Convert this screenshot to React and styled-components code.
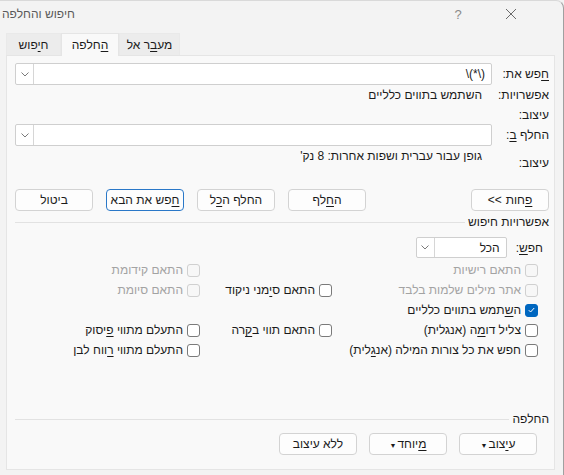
import React from 'react';
import styled, { createGlobalStyle } from 'styled-components';

const GlobalStyle = createGlobalStyle`
  body {
    margin: 0;
    background: #f3f3f3;
    font-family: "Liberation Sans", "DejaVu Sans", sans-serif;
    font-size: 12px;
    color: #1b1b1b;
  }
`;

const Window = styled.div`
  width: 564px;
  height: 475px;
  box-sizing: border-box;
  background: #f3f3f3;
  border-top: 1px solid #d9d9d9;
  border-right: 1px solid #a0a0a0;
  border-top-right-radius: 8px;
  display: flex;
  flex-direction: column;
  overflow: hidden;
`;

const TitleBar = styled.div`
  height: 26px;
  display: flex;
  align-items: center;
  padding-left: 2px;
`;

const Title = styled.div`
  flex: 1;
  color: #5a5a5a;
  font-size: 12px;
`;

const TitleButton = styled.div`
  width: 46px;
  height: 26px;
  display: flex;
  align-items: center;
  justify-content: center;
  color: #8a8a8a;
  font-size: 13px;
  margin-left: ${p => p.$gap || 0}px;
`;

const TitleControls = styled.div`
  display: flex;
  padding-right: 29px;
`;

const TabStrip = styled.div`
  display: flex;
  padding-left: 6px;
  margin-top: 6px;
  height: 22px;
`;

const Tab = styled.div`
  width: ${p => p.$w}px;
  display: flex;
  align-items: center;
  justify-content: center;
  box-sizing: border-box;
  direction: rtl;
  background: ${p => (p.$active ? '#f9f9f9' : '#ececec')};
  border: 1px solid ${p => (p.$active ? '#e5e5e5' : '#e9e9e9')};
  border-bottom: none;
  margin-bottom: ${p => (p.$active ? '-1px' : '0')};
  position: relative;
  z-index: ${p => (p.$active ? 1 : 0)};
  color: #1b1b1b;
`;

const Panel = styled.div`
  flex: 1;
  margin: 0 8px 5px 6px;
  background: #f9f9f9;
  border: 1px solid #e5e5e5;
  direction: rtl;
  padding: 7px 5px 14px 8px;
  display: flex;
  flex-direction: column;
`;

const FormGrid = styled.div`
  display: grid;
  grid-template-columns: 52px 1fr;
  grid-template-rows: 22px 20px 19px 22px 24px;
  column-gap: 5px;
`;

const Label = styled.div`
  align-self: ${p => p.$align || 'center'};
  white-space: nowrap;
`;

const Value = styled.div`
  align-self: ${p => p.$align || 'center'};
  padding-right: 10px;
  padding-top: ${p => p.$top || 0}px;
  white-space: nowrap;
`;

const Combo = styled.div`
  height: ${p => p.$h || 22}px;
  width: ${p => (p.$w ? `${p.$w}px` : 'auto')};
  box-sizing: border-box;
  background: #ffffff;
  border: 1px solid #cfcfcf;
  border-radius: 2px;
  display: flex;
  align-items: stretch;
`;

const ComboText = styled.div`
  flex: 1;
  display: flex;
  align-items: center;
  padding-right: 6px;
  direction: ltr;
  justify-content: flex-end;
  unicode-bidi: plaintext;
`;

const ComboArrow = styled.div`
  width: 17px;
  border-right: 1px solid #d6d6d6;
  display: flex;
  align-items: center;
  justify-content: center;
`;

const ButtonRow = styled.div`
  display: flex;
  justify-content: space-between;
  margin-top: ${p => p.$top || 0}px;
  padding-right: ${p => p.$pad || 0}px;
`;

const ButtonGroup = styled.div`
  display: flex;
  gap: ${p => p.$gap || 12}px;
`;

const Button = styled.div`
  width: 78px;
  height: 22px;
  box-sizing: border-box;
  background: #fdfdfd;
  border: 1px solid ${p => (p.$focus ? '#2a78c8' : '#d3d3d3')};
  border-radius: 4px;
  display: flex;
  align-items: center;
  justify-content: center;
  gap: 4px;
  direction: ${p => (p.$ltr ? 'ltr' : 'rtl')};
  white-space: nowrap;
  color: #1b1b1b;
`;

const ButtonText = styled.span`
  display: block;
  direction: rtl;
`;

const Arrows = styled.span`
  display: block;
  direction: ltr;
  unicode-bidi: bidi-override;
`;

const Caret = styled.span`
  font-size: 7px;
  margin-right: 1px;
`;

const SectionHeader = styled.div`
  display: flex;
  align-items: center;
  gap: 3px;
  height: 14px;
  margin-top: ${p => p.$top || 0}px;
`;

const Line = styled.div`
  flex: 1;
  height: 1px;
  background: #e2e2e2;
`;

const SearchRow = styled.div`
  display: flex;
  align-items: center;
  gap: 9px;
  padding-right: 6px;
  margin-top: 8px;
`;

const CheckGrid = styled.div`
  display: grid;
  grid-template-columns: 206px 132px 1fr;
  grid-auto-rows: 20px;
  padding-right: 11px;
  margin-top: 2px;
`;

const CheckItem = styled.div`
  display: flex;
  align-items: center;
  gap: 4px;
  white-space: nowrap;
  color: ${p => (p.$disabled ? '#a3a3a3' : '#1b1b1b')};
`;

const Box = styled.span`
  width: 13px;
  height: 13px;
  box-sizing: border-box;
  border-radius: 3px;
  border: 1px solid ${p => (p.$checked ? '#0067c0' : p.$disabled ? '#d0d0d0' : '#7a7a7a')};
  background: ${p => (p.$checked ? '#0067c0' : p.$disabled ? '#f7f7f7' : '#ffffff')};
  display: flex;
  align-items: center;
  justify-content: center;
  flex-shrink: 0;
`;

const Spacer = styled.div`
  flex: 1;
`;

const U = styled.u`
  text-decoration: underline;
  text-underline-offset: 2px;
`;

const Chevron = () => (
  <svg width="8" height="5" viewBox="0 0 8 5">
    <polyline points="0.5,0.5 4,4 7.5,0.5" fill="none" stroke="#7a7a7a" strokeWidth="1" />
  </svg>
);

const CloseIcon = () => (
  <svg width="12" height="12" viewBox="0 0 12 12">
    <path d="M1 1 L11 11 M11 1 L1 11" stroke="#6a6a6a" strokeWidth="1" />
  </svg>
);

const Check = ({ checked, disabled, children }) => (
  <CheckItem $disabled={disabled}>
    <Box $checked={checked} $disabled={disabled}>
      {checked && (
        <svg width="7" height="6" viewBox="0 0 7 6">
          <polyline points="0.8,3.2 2.6,5 6.2,1" fill="none" stroke="#ffffff" strokeWidth="1" />
        </svg>
      )}
    </Box>
    <span>{children}</span>
  </CheckItem>
);

const Empty = () => <div />;

export default function App() {
  return (
    <>
      <GlobalStyle />
      <Window>
        <TitleBar>
          <Title>חיפוש והחלפה</Title>
          <TitleControls>
            <TitleButton>?</TitleButton>
            <TitleButton $gap={7}>
              <CloseIcon />
            </TitleButton>
          </TitleControls>
        </TitleBar>

        <TabStrip>
          <Tab $w={55}>
            <span>ח<U>י</U>פוש</span>
          </Tab>
          <Tab $w={58} $active>
            <span><U>ה</U>חלפה</span>
          </Tab>
          <Tab $w={61}>
            <span>מע<U>ב</U>ר אל</span>
          </Tab>
        </TabStrip>

        <Panel>
          <FormGrid>
            <Label>
              <U>ח</U>פש את:
            </Label>
            <Combo>
              <ComboText>\(*\)</ComboText>
              <ComboArrow>
                <Chevron />
              </ComboArrow>
            </Combo>

            <Label>אפשרויות:</Label>
            <Value>השתמש בתווים כלליים</Value>

            <Label>עיצוב:</Label>
            <Empty />

            <Label>
              החלף <U>ב</U>:
            </Label>
            <Combo>
              <ComboText />
              <ComboArrow>
                <Chevron />
              </ComboArrow>
            </Combo>

            <Label $align="end">עיצוב:</Label>
            <Value $align="start" $top={3}>
              גופן עבור עברית ושפות אחרות: 8 נק'
            </Value>
          </FormGrid>

          <ButtonRow $top={19}>
            <Button $ltr>
              <Arrows>&lt;&lt;</Arrows>
              <ButtonText>
                <U>פ</U>חות
              </ButtonText>
            </Button>
            <ButtonGroup $gap={13}>
              <Button>
                <ButtonText>ה<U>ח</U>לף</ButtonText>
              </Button>
              <Button>
                <ButtonText>החלף ה<U>כ</U>ל</ButtonText>
              </Button>
              <Button $focus>
                <ButtonText><U>ח</U>פש את הבא</ButtonText>
              </Button>
              <Button>
                <ButtonText>ביטול</ButtonText>
              </Button>
            </ButtonGroup>
          </ButtonRow>

          <SectionHeader $top={4}>
            <span>אפשרויות חיפוש</span>
            <Line />
          </SectionHeader>

          <SearchRow>
            <span>
              חפ<U>ש</U>:
            </span>
            <Combo $w={91} $h={21}>
              <ComboText>הכל</ComboText>
              <ComboArrow>
                <Chevron />
              </ComboArrow>
            </Combo>
          </SearchRow>

          <CheckGrid>
            <Check disabled>התאם רישיות</Check>
            <Empty />
            <Check disabled>התאם קידומת</Check>

            <Check disabled>אתר מילים שלמות בלבד</Check>
            <Check>
              התאם ס<U>י</U>מני ניקוד
            </Check>
            <Check disabled>התאם סיומת</Check>

            <Check checked>
              ה<U>ש</U>תמש בתווים כלליים
            </Check>
            <Empty />
            <Empty />

            <Check>
              צליל דו<U>מ</U>ה (אנגלית)
            </Check>
            <Check>
              התאם תווי ב<U>ק</U>רה
            </Check>
            <Check>
              התעלם מתווי <U>פ</U>יסוק
            </Check>

            <Check>
              חפש את כל צורות המילה (אנ<U>ג</U>לית)
            </Check>
            <Empty />
            <Check>
              התעלם מתווי <U>ר</U>ווח לבן
            </Check>
          </CheckGrid>

          <Spacer />

          <SectionHeader>
            <span>החלפה</span>
            <Line />
          </SectionHeader>

          <ButtonRow $top={7} $pad={12}>
            <ButtonGroup $gap={12}>
              <Button>
                <ButtonText>
                  ע<U>י</U>צוב<Caret>▼</Caret>
                </ButtonText>
              </Button>
              <Button>
                <ButtonText>
                  <U>מ</U>יוחד<Caret>▼</Caret>
                </ButtonText>
              </Button>
              <Button>
                <ButtonText>ללא עיצוב</ButtonText>
              </Button>
            </ButtonGroup>
          </ButtonRow>
        </Panel>
      </Window>
    </>
  );
}
